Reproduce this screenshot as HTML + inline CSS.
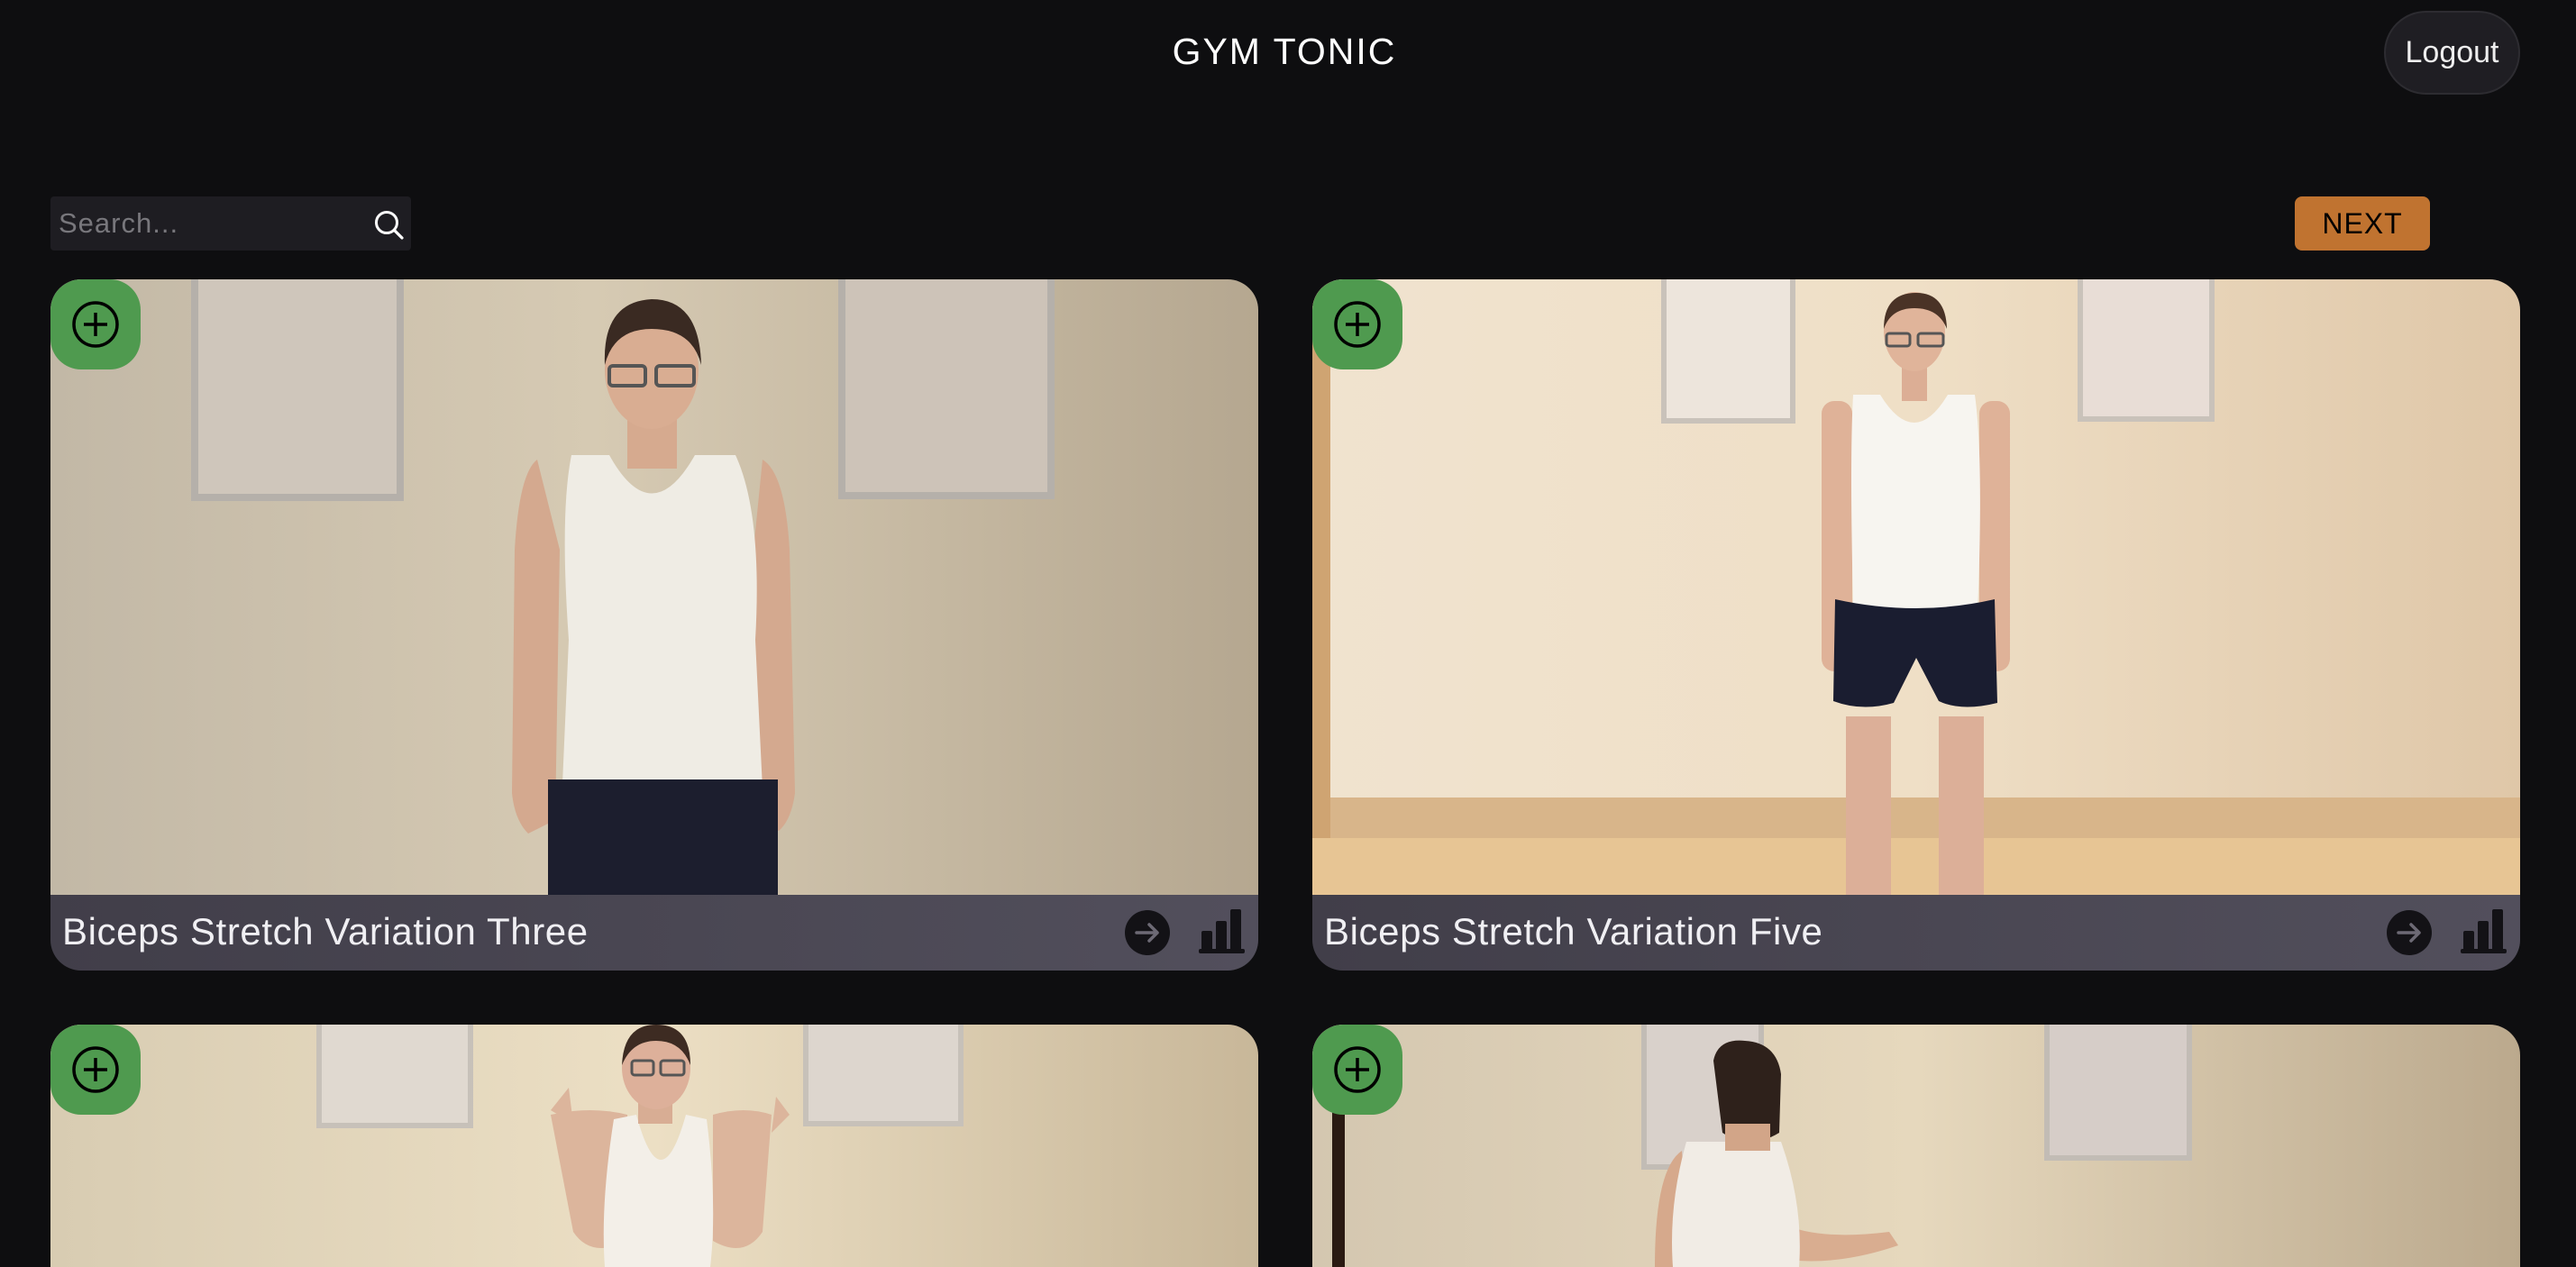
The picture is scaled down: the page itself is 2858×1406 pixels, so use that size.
<!DOCTYPE html>
<html><head><meta charset="utf-8"><style>
*{margin:0;padding:0;box-sizing:border-box}
html,body{width:2858px;height:1406px;overflow:hidden;background:#0e0e10;font-family:"Liberation Sans",sans-serif}
#wrap{position:relative;width:2858px;height:1406px;overflow:hidden}
.title{position:absolute;left:0;width:2850px;top:34px;text-align:center;color:#fff;font-size:41px;letter-spacing:2px}
.logout{position:absolute;left:2645px;top:12px;width:151px;height:93px;border-radius:47px;background:#1f1e23;border:2px solid #2d2c31;color:#eee;font-size:34px;text-align:center;line-height:89px}
.search{position:absolute;left:56px;top:218px;width:400px;height:60px;background:#1e1d22;border-radius:4px}
.search span{position:absolute;left:9px;top:12px;color:#78777c;font-size:31px;letter-spacing:1px}
.next{position:absolute;left:2546px;top:218px;width:150px;height:60px;background:#c07330;border-radius:8px;color:#000;font-size:32px;text-align:center;line-height:60px;letter-spacing:1px}
.card{position:absolute;width:1340px;overflow:hidden;border-radius:34px}
.card svg.img{position:absolute;left:0;top:0}
.cap{position:absolute;left:0;top:683px;width:1340px;height:84px;background:linear-gradient(90deg,#413e49,#524f5c);}
.cap .t{position:absolute;left:13px;top:17px;color:#f0eff3;font-size:42px;letter-spacing:0.6px}
.plus{position:absolute;left:0;top:0;width:100px;height:100px;background:#4f9a4f;border-radius:34px}
</style></head><body><div id="wrap">
<div class="title">GYM TONIC</div>
<div class="logout">Logout</div>
<div class="search"><span>Search...</span></div>
<svg style="position:absolute;left:414px;top:232px" width="36" height="36" viewBox="0 0 36 36"><circle cx="15" cy="15" r="11.5" fill="none" stroke="#fff" stroke-width="3"/><line x1="23.5" y1="23.5" x2="32" y2="32" stroke="#fff" stroke-width="3.2" stroke-linecap="round"/></svg>
<div class="next">NEXT</div>

<div class="card" style="left:56px;top:310px;height:767px">
<svg class="img" width="1340" height="683" viewBox="0 0 1340 683">
<defs><linearGradient id="w1" x1="0" x2="1"><stop offset="0" stop-color="#c2b8a6"/><stop offset="0.45" stop-color="#d6cab3"/><stop offset="1" stop-color="#b5a790"/></linearGradient></defs>
<rect width="1340" height="683" fill="url(#w1)"/>
<rect x="160" y="-10" width="228" height="252" fill="#cfc6bb" stroke="#b5b0aa" stroke-width="8"/>
<rect x="878" y="-10" width="232" height="250" fill="#cdc3b8" stroke="#b5b0aa" stroke-width="8"/>
<path d="M540 200 Q520 215 515 300 L512 570 Q515 600 530 615 L560 600 L565 300 Z" fill="#d4a98f"/>
<path d="M790 200 Q815 215 820 300 L826 570 Q822 600 808 612 L782 600 L780 300 Z" fill="#d4a98f"/>
<path d="M578 195 L620 195 Q667 280 715 195 L760 195 Q790 260 782 400 L790 565 Q720 590 620 570 L568 560 L575 400 Q565 260 578 195 Z" fill="#efece4"/>
<rect x="552" y="555" width="255" height="130" fill="#1c1e2e"/>
<rect x="640" y="130" width="55" height="80" fill="#d6aa8f"/>
<ellipse cx="667" cy="100" rx="52" ry="66" fill="#d9ad92"/>
<path d="M615 95 Q612 25 667 22 Q720 22 722 95 Q712 55 667 55 Q625 55 615 95 Z" fill="#3a2a22"/>
<rect x="620" y="96" width="40" height="22" rx="4" fill="none" stroke="#555" stroke-width="4"/><rect x="672" y="96" width="42" height="22" rx="4" fill="none" stroke="#555" stroke-width="4"/>
</svg>
<div class="plus"></div>
<svg style="position:absolute;left:0;top:0" width="100" height="100"><circle cx="50" cy="50" r="24" fill="none" stroke="#000" stroke-width="3.5"/><path d="M50 37V63M37 50H63" stroke="#000" stroke-width="3.5"/></svg>
<div class="cap"><div class="t">Biceps Stretch Variation Three</div>
<svg style="position:absolute;left:1190px;top:16px" width="140" height="56"><circle cx="27" cy="26" r="25" fill="#131216"/><path d="M15 26H38M29 17L38 26L29 35" fill="none" stroke="#6d6a75" stroke-width="3.5" stroke-linecap="round" stroke-linejoin="round"/><rect x="87" y="24" width="12" height="24" rx="2" fill="#131216"/><rect x="103" y="13" width="12" height="35" rx="2" fill="#131216"/><rect x="119" y="0" width="12" height="48" rx="2" fill="#131216"/><rect x="84" y="44" width="51" height="5" rx="2" fill="#131216"/></svg>
</div></div>

<div class="card" style="left:1456px;top:310px;height:767px">
<svg class="img" width="1340" height="683" viewBox="0 0 1340 683">
<defs><linearGradient id="w2" x1="0" x2="1"><stop offset="0" stop-color="#f0e3cf"/><stop offset="0.5" stop-color="#efdfc6"/><stop offset="1" stop-color="#dfc7a8"/></linearGradient></defs>
<rect width="1340" height="683" fill="url(#w2)"/>
<rect x="0" y="0" width="20" height="620" fill="#cfa472"/>
<rect x="390" y="-10" width="143" height="167" fill="#ede5dc" stroke="#c9c2ba" stroke-width="6"/>
<rect x="852" y="-10" width="146" height="165" fill="#e8ddd6" stroke="#c9c2ba" stroke-width="6"/>
<rect x="20" y="575" width="1320" height="47" fill="#d8b58a"/>
<rect x="0" y="620" width="1340" height="63" fill="#e7c594"/>
<rect x="565" y="135" width="34" height="300" rx="14" fill="#dfb298"/>
<rect x="740" y="135" width="34" height="300" rx="14" fill="#dfb298"/>
<rect x="592" y="485" width="50" height="198" fill="#dcaf98"/><rect x="695" y="485" width="50" height="198" fill="#dcaf98"/>
<path d="M600 128 L630 128 Q668 190 705 128 L735 128 Q745 200 738 370 Q670 380 600 360 Q596 200 600 128 Z" fill="#f7f5f0"/>
<path d="M580 355 Q670 375 757 355 L760 470 Q720 480 695 468 L670 420 L645 470 Q610 480 578 468 Z" fill="#1a1d30"/>
<rect x="654" y="85" width="28" height="50" fill="#dcae95"/>
<ellipse cx="668" cy="58" rx="34" ry="44" fill="#e0b49a"/>
<path d="M634 55 Q634 15 670 15 Q703 15 704 55 Q695 32 668 32 Q642 32 634 55 Z" fill="#4a3326"/>
<rect x="637" y="60" width="26" height="14" rx="3" fill="none" stroke="#555" stroke-width="3"/><rect x="672" y="60" width="28" height="14" rx="3" fill="none" stroke="#555" stroke-width="3"/>
</svg>
<div class="plus"></div>
<svg style="position:absolute;left:0;top:0" width="100" height="100"><circle cx="50" cy="50" r="24" fill="none" stroke="#000" stroke-width="3.5"/><path d="M50 37V63M37 50H63" stroke="#000" stroke-width="3.5"/></svg>
<div class="cap"><div class="t">Biceps Stretch Variation Five</div>
<svg style="position:absolute;left:1190px;top:16px" width="140" height="56"><circle cx="27" cy="26" r="25" fill="#131216"/><path d="M15 26H38M29 17L38 26L29 35" fill="none" stroke="#6d6a75" stroke-width="3.5" stroke-linecap="round" stroke-linejoin="round"/><rect x="87" y="24" width="12" height="24" rx="2" fill="#131216"/><rect x="103" y="13" width="12" height="35" rx="2" fill="#131216"/><rect x="119" y="0" width="12" height="48" rx="2" fill="#131216"/><rect x="84" y="44" width="51" height="5" rx="2" fill="#131216"/></svg>
</div></div>

<div class="card" style="left:56px;top:1137px;height:269px;border-radius:34px 34px 0 0">
<svg class="img" width="1340" height="269" viewBox="0 0 1340 269">
<defs><linearGradient id="w3" x1="0" x2="1"><stop offset="0" stop-color="#d8ccb2"/><stop offset="0.5" stop-color="#ecdfc4"/><stop offset="1" stop-color="#c8b799"/></linearGradient></defs>
<rect width="1340" height="269" fill="url(#w3)"/>
<rect x="298" y="-10" width="168" height="122" fill="#e0d9d0" stroke="#c7c1b9" stroke-width="6"/>
<rect x="838" y="-10" width="172" height="120" fill="#ddd6ce" stroke="#c7c1b9" stroke-width="6"/>
<path d="M555 100 Q600 90 640 100 L640 240 Q600 260 580 230 Z" fill="#dcb59c"/>
<path d="M800 100 Q770 90 735 100 L735 240 Q770 260 790 230 Z" fill="#dcb59c"/>
<path d="M555 95 L575 70 L580 110 Z M805 80 L820 100 L800 120 Z" fill="#dcb59c"/>
<path d="M625 105 L650 100 Q677 200 705 100 L728 105 Q740 200 732 269 L615 269 Q610 200 625 105 Z" fill="#f3efe8"/>
<rect x="652" y="70" width="38" height="40" fill="#d8ad94"/>
<ellipse cx="672" cy="48" rx="38" ry="46" fill="#ddb09a"/>
<path d="M634 45 Q636 0 672 0 Q710 0 710 45 Q700 18 672 18 Q645 18 634 45 Z" fill="#3d2b22"/>
<rect x="645" y="40" width="24" height="16" rx="3" fill="none" stroke="#555" stroke-width="3"/><rect x="677" y="40" width="26" height="16" rx="3" fill="none" stroke="#555" stroke-width="3"/>
</svg>
<div class="plus"></div>
<svg style="position:absolute;left:0;top:0" width="100" height="100"><circle cx="50" cy="50" r="24" fill="none" stroke="#000" stroke-width="3.5"/><path d="M50 37V63M37 50H63" stroke="#000" stroke-width="3.5"/></svg>
</div>

<div class="card" style="left:1456px;top:1137px;height:269px;border-radius:34px 34px 0 0">
<svg class="img" width="1340" height="269" viewBox="0 0 1340 269">
<defs><linearGradient id="w4" x1="0" x2="1"><stop offset="0" stop-color="#d4c7b0"/><stop offset="0.5" stop-color="#e6d8bd"/><stop offset="1" stop-color="#bba98d"/></linearGradient></defs>
<rect width="1340" height="269" fill="url(#w4)"/>
<rect x="22" y="90" width="14" height="179" fill="#2a1a12"/>
<rect x="368" y="-10" width="130" height="168" fill="#d9d1cb" stroke="#c2bcb5" stroke-width="6"/>
<rect x="815" y="-10" width="158" height="158" fill="#d6cdc8" stroke="#c2bcb5" stroke-width="6"/>
<path d="M520 220 Q560 240 640 230 L650 245 Q580 269 520 260 Z" fill="#d9ad90"/>
<path d="M410 140 Q380 160 380 269 L420 269 Z" fill="#d6a98c"/>
<path d="M415 130 L520 130 Q545 200 540 269 L400 269 Q395 200 415 130 Z" fill="#f1ece5"/>
<path d="M445 40 Q450 15 480 18 Q515 20 520 55 L518 120 Q485 140 455 120 Z" fill="#2e211b"/>
<rect x="458" y="110" width="50" height="30" fill="#d2a588"/>
</svg>
<div class="plus"></div>
<svg style="position:absolute;left:0;top:0" width="100" height="100"><circle cx="50" cy="50" r="24" fill="none" stroke="#000" stroke-width="3.5"/><path d="M50 37V63M37 50H63" stroke="#000" stroke-width="3.5"/></svg>
</div>
</div></body></html>
